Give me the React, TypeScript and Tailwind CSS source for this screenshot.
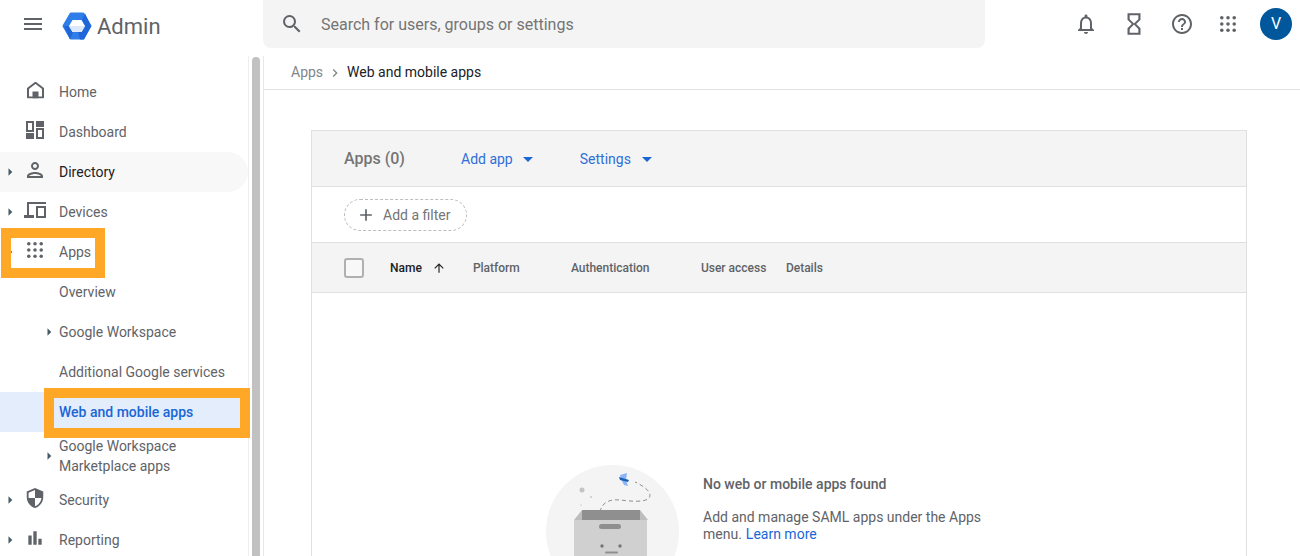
import type { ReactNode } from "react";
import {
  MdAdd,
  MdArrowDropDown,
  MdArrowRight,
  MdArrowUpward,
  MdBarChart,
  MdChevronRight,
  MdHelpOutline,
  MdMenu,
  MdOutlineHourglassEmpty,
  MdOutlineNotifications,
  MdOutlinePerson,
  MdSearch,
  MdSecurity,
} from "react-icons/md";

const Dots = ({ size = 16 }: { size?: number }) => (
  <svg width={size} height={size} viewBox="0 0 18 18" fill="#5f6368">
    {[2, 9, 16].map(y =>
      [2, 9, 16].map(x => <circle key={`${x}-${y}`} cx={x} cy={y} r="2" />)
    )}
  </svg>
);

const HomeGlyph = () => (
  <svg width="17" height="17" viewBox="0 0 17 17" fill="none">
    <path d="M1 16V7l7.500-5.700L16 7v9H1z" stroke="#5f6368" strokeWidth="2" strokeLinejoin="round" />
    <rect x="5.500" y="10" width="6" height="7" fill="#5f6368" />
  </svg>
);

const DashboardGlyph = () => (
  <svg width="18" height="18" viewBox="0 0 18 18" fill="#5f6368">
    <path d="M0 0h8v11H0V0zm2 2v7h4V2H2z" fillRule="evenodd" />
    <path d="M10 0h8v6h-8z" />
    <path d="M0 12h8v6H0z" />
    <path d="M10 7h8v11h-8V7zm2 2v7h4V9h-4z" fillRule="evenodd" />
  </svg>
);

const DevicesGlyph = () => (
  <svg width="22" height="16" viewBox="0 0 22 16" fill="#5f6368">
    <path d="M3 0h19v2H5v11h5v3H0v-3h3V0z" />
    <path d="M12 4h10v12H12V4zm2 2v8h6V6h-6z" fillRule="evenodd" />
  </svg>
);

const Logo = () => (
  <svg width="30" height="28" viewBox="0 0 30 28">
    <path
      d="M9 2h12l7 12-7 12H9L2 14z"
      fill="#2f7de8"
      stroke="#2f7de8"
      strokeWidth="3"
      strokeLinejoin="round"
    />
    <path d="M20 8l3-6.500L29 14l-7 13.500h-4l-2-7.500 4-6z" fill="#1f66d9" />
    <path d="M2 14h6l3 6-3 7.500z" fill="#1f66d9" />
    <path d="M10.500 8h9l3.500 6-3.500 6h-9L7 14z" fill="#ffffff" />
    <path d="M7 14h16l-3.500 6h-9z" fill="#dce8fb" />
  </svg>
);

const BoxArt = () => (
  <svg width="133" height="91" viewBox="0 0 133 91" className="shrink-0">
    <circle cx="66.500" cy="66.500" r="66.500" fill="#f4f4f4" />
    <path d="M28 55l8-10h58l8 10z" fill="#bdbdbd" />
    <rect x="36" y="45" width="58" height="10" fill="#8f8f8f" />
    <rect x="28" y="55" width="73" height="36" fill="#d0d0d0" />
    <rect x="53" y="59" width="22" height="5" rx="2.500" fill="#8f8f8f" />
    <circle cx="56" cy="81" r="1.700" fill="#757575" />
    <circle cx="74" cy="81" r="1.700" fill="#757575" />
    <rect x="59" y="86.500" width="13" height="2" rx="1" fill="#8f8f8f" />
    <circle cx="36" cy="25" r="2.500" fill="#c4c4c4" />
    <circle cx="45" cy="32" r="0.900" fill="#c4c4c4" />
    <circle cx="35" cy="40" r="0.700" fill="#c4c4c4" />
    <path
      d="M54 47c2-10 10-13 20-12s24 3 29-2c3-4-1-10-14-16"
      fill="none"
      stroke="#8f8f8f"
      strokeWidth="1"
      strokeDasharray="4 3"
    />
    <path d="M74 10l7-2-1 7 2 6-4-1-3-6z" fill="#8ab4f8" />
    <path d="M73 12l10 3-1 2-8-2z" fill="#1a5fb4" />
  </svg>
);

type RowProps = {
  label: ReactNode;
  icon?: ReactNode;
  arrow?: boolean;
  sub?: boolean;
  className?: string;
  textClass?: string;
};

const NavRow = ({ label, icon, arrow, sub, className = "h-10", textClass = "text-[#5f6368]" }: RowProps) => (
  <div className={`relative flex items-center pl-[59px] ${className}`}>
    {arrow && (
      <MdArrowRight
        size={18}
        className={`absolute top-1/2 -translate-y-1/2 text-[#455a64] ${sub ? "left-[40px]" : "left-[1px]"}`}
      />
    )}
    {icon && <span className="absolute left-[23px] top-[18px] flex w-6 -translate-y-1/2 justify-center">{icon}</span>}
    <span className={`text-[14px] leading-5 ${textClass}`}>{label}</span>
  </div>
);

const Sidebar = () => (
  <nav className="h-full w-[249px] shrink-0 border-r border-[#eeeeee] pt-4">
    <NavRow label="Home" icon={<HomeGlyph />} />
    <NavRow label="Dashboard" icon={<DashboardGlyph />} />
    <NavRow
      label="Directory"
      arrow
      icon={<MdOutlinePerson size={24} className="text-[#5f6368]" />}
      className="h-10 rounded-r-full bg-[#f8f8f8]"
      textClass="text-[#202124]"
    />
    <NavRow label="Devices" arrow icon={<DevicesGlyph />} />
    <NavRow label="Apps" arrow icon={<Dots size={16} />} />
    <NavRow label="Overview" />
    <NavRow label="Google Workspace" arrow sub />
    <NavRow label="Additional Google services" />
    <NavRow label="Web and mobile apps" className="h-10 bg-[#e3edfb]" textClass="font-medium text-[#1a66d6]" />
    <NavRow
      label={
        <>
          Google Workspace
          <br />
          Marketplace apps
        </>
      }
      arrow
      sub
      className="h-12"
    />
    <NavRow label="Security" arrow icon={<MdSecurity size={22} className="text-[#5f6368]" />} />
    <NavRow label="Reporting" arrow icon={<MdBarChart size={20} className="text-[#5f6368]" />} />
  </nav>
);

const Card = () => (
  <div className="border border-[#e0e0e0]">
    <div className="flex h-[56px] items-center border-b border-[#e0e0e0] bg-[#f4f4f4] pl-8 text-[14px]">
      <span className="w-[117px] text-[16px] font-medium text-[#757575]">Apps (0)</span>
      <span className="mt-[2px] text-[#2f6fd8]">Add app</span>
      <MdArrowDropDown size={24} className="ml-[3px] text-[#1a66d6]" />
      <span className="ml-[40px] mt-[2px] text-[#2f6fd8]">Settings</span>
      <MdArrowDropDown size={24} className="ml-[4px] text-[#1a66d6]" />
    </div>
    <div className="flex h-[56px] items-center border-b border-[#e0e0e0] pl-8">
      <div className="flex h-8 w-[123px] items-center rounded-full border border-dashed border-[#bdbdbd] pl-[11px] text-[14px] text-[#757575]">
        <MdAdd size={20} className="mr-[7px] text-[#5f6368]" />
        <span className="mt-[2px]">Add a filter</span>
      </div>
    </div>
    <div className="flex h-[50px] items-center border-b border-[#e0e0e0] bg-[#f4f4f4] pl-8 text-[12px] font-medium text-[#5f6368]">
      <span className="mr-[26px] h-5 w-5 rounded-[3px] border-2 border-[#b0b0b0] bg-[#f8f8f8]" />
      <span className="text-[#202124]">Name</span>
      <MdArrowUpward size={14} className="ml-[10px] mr-[27px] text-[#202124]" />
      <span className="w-[98px]">Platform</span>
      <span className="w-[130px]">Authentication</span>
      <span className="w-[85px]">User access</span>
      <span>Details</span>
    </div>
    <div className="flex pb-[60px] pl-[234px] pt-[172px]">
      <BoxArt />
      <div className="ml-6 mt-[11px] w-[300px] text-[14px] leading-[17px] text-[#5f6368]">
        <p className="font-medium">No web or mobile apps found</p>
        <p className="mt-4">Add and manage SAML apps under the Apps</p>
        <div className="flex gap-1">
          <span>menu.</span>
          <span className="text-[#1a66d6]">Learn more</span>
        </div>
      </div>
    </div>
  </div>
);

export default function App() {
  return (
    <div className="relative h-[556px] w-[1300px] overflow-hidden bg-white font-['Roboto',sans-serif]">
      <header className="flex h-14 items-start">
        <div className="flex h-12 w-[263px] shrink-0 items-center pl-[21px]">
          <MdMenu size={24} className="text-[#5f6368]" />
          <span className="ml-[17px] mt-[4px]">
            <Logo />
          </span>
          <span className="ml-[5px] mt-[4px] text-[22px] text-[#5f6368]">Admin</span>
        </div>
        <div className="flex h-12 w-[722px] items-center rounded-b-lg bg-[#f4f4f4] pl-[17px] text-[16px] text-[#757575]">
          <MdSearch size={24} className="mr-[17px] text-[#5f6368]" />
          <span className="mt-[2px]">Search for users, groups or settings</span>
        </div>
        <div className="ml-auto flex h-12 items-center pr-[8px] text-[#5f6368]">
          <MdOutlineNotifications size={24} />
          <MdOutlineHourglassEmpty size={26} className="ml-[23px]" />
          <MdHelpOutline size={24} className="ml-[23px]" />
          <span className="ml-[26px]">
            <Dots size={16} />
          </span>
          <span className="ml-[24px] flex h-8 w-8 items-center justify-center rounded-full bg-[#01579b] text-[16px] text-white">
            V
          </span>
        </div>
      </header>

      <div className="flex h-[500px]">
        <Sidebar />
        <div className="w-[14px] shrink-0 pl-[3px] pt-px">
          <div className="h-full w-2 rounded-t-full bg-[#c1c1c1]" />
        </div>
        <main className="min-w-0 flex-1 border-l border-[#e8e8e8]">
          <div className="flex h-[34px] items-center border-b border-[#e0e0e0] pl-[27px] text-[14px]">
            <span className="text-[#80868b]">Apps</span>
            <MdChevronRight size={16} className="mx-[4px] text-[#80868b]" />
            <span className="text-[#202124]">Web and mobile apps</span>
          </div>
          <div className="pl-[47px] pr-[53px] pt-10">
            <Card />
          </div>
        </main>
      </div>

      <div className="absolute left-[1px] top-[228px] h-[50px] w-[104px] border-[10px] border-[#ffa726]" />
      <div className="absolute left-[44px] top-[388px] h-[50px] w-[206px] border-[10px] border-[#ffa726]" />
    </div>
  );
}
